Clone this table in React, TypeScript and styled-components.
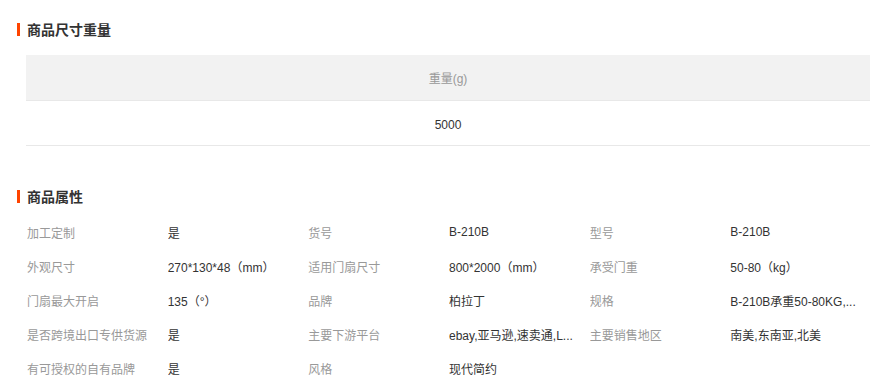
import React from 'react';
import styled, { createGlobalStyle } from 'styled-components';

const GlobalStyle = createGlobalStyle`
  body {
    margin: 0;
    background: #fff;
    font-family: "Liberation Sans", "Noto Sans CJK SC", sans-serif;
  }
`;

const Page = styled.div`
  padding: 22px 17px 0 17px;
  width: 853px;
`;

const Section = styled.section<{ gap?: number }>`
  margin-bottom: ${(p) => p.gap ?? 0}px;
`;

const Title = styled.h2`
  display: flex;
  align-items: center;
  margin: 0;
  height: 14px;
  font-size: 14px;
  font-weight: bold;
  color: #333;
  font-family: "Noto Sans CJK SC", sans-serif;

  &::before {
    content: '';
    display: block;
    width: 3px;
    height: 13px;
    background: #ff4400;
    margin-right: 7px;
  }
`;

const Table = styled.table`
  margin: 19px 0 0 9px;
  width: 844px;
  border-collapse: collapse;
  font-size: 12px;
`;

const HeadCell = styled.th`
  height: 45px;
  background: #f2f2f2;
  border-bottom: 1px solid #e8e8e8;
  color: #999;
  font-weight: normal;
  text-align: center;
  padding: 0;
`;

const BodyCell = styled.td`
  height: 45px;
  border-bottom: 1px solid #e8e8e8;
  color: #333;
  text-align: center;
  padding: 3px 0 0;
  box-sizing: border-box;
`;

const AttrGrid = styled.div`
  margin: 12px 0 0 10px;
  width: 844px;
  display: grid;
  grid-template-columns: repeat(6, 1fr);
  grid-auto-rows: 34px;
  font-size: 12px;
`;

const Cell = styled.div<{ label?: boolean }>`
  display: flex;
  align-items: center;
  color: ${(p) => (p.label ? '#999' : '#333')};
  white-space: nowrap;
  overflow: hidden;
  padding-right: 8px;
`;

const attrs: [string, string][] = [
  ['加工定制', '是'],
  ['货号', 'B-210B'],
  ['型号', 'B-210B'],
  ['外观尺寸', '270*130*48（mm）'],
  ['适用门扇尺寸', '800*2000（mm）'],
  ['承受门重', '50-80（kg）'],
  ['门扇最大开启', '135（°）'],
  ['品牌', '柏拉丁'],
  ['规格', 'B-210B承重50-80KG,...'],
  ['是否跨境出口专供货源', '是'],
  ['主要下游平台', 'ebay,亚马逊,速卖通,L...'],
  ['主要销售地区', '南美,东南亚,北美'],
  ['有可授权的自有品牌', '是'],
  ['风格', '现代简约'],
];

export default function App() {
  return (
    <>
      <GlobalStyle />
      <Page>
        <Section gap={43}>
          <Title>商品尺寸重量</Title>
          <Table>
            <thead>
              <tr>
                <HeadCell>重量(g)</HeadCell>
              </tr>
            </thead>
            <tbody>
              <tr>
                <BodyCell>5000</BodyCell>
              </tr>
            </tbody>
          </Table>
        </Section>
        <Section>
          <Title>商品属性</Title>
          <AttrGrid>
            {attrs.map(([k, v]) => (
              <React.Fragment key={k}>
                <Cell label>{k}</Cell>
                <Cell>{v}</Cell>
              </React.Fragment>
            ))}
          </AttrGrid>
        </Section>
      </Page>
    </>
  );
}
